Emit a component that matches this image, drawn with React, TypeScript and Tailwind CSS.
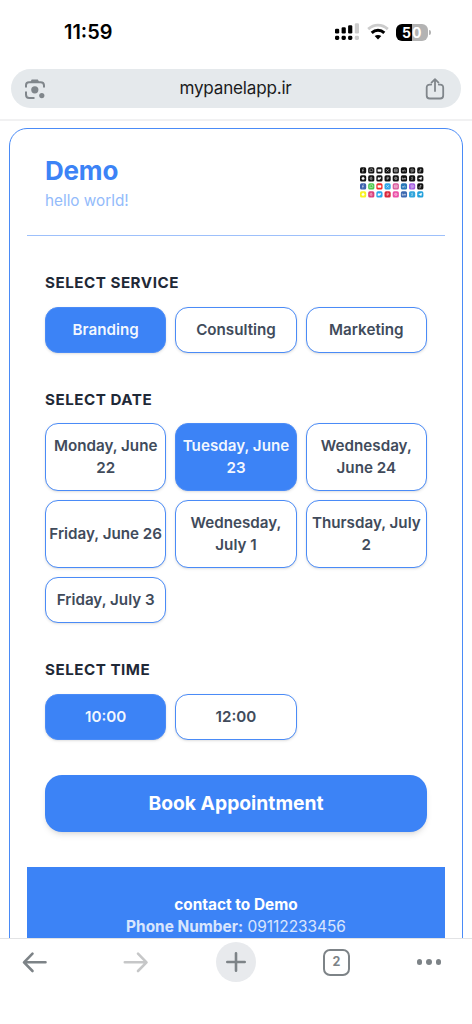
import React, { useState } from "react";
import clsx from "clsx";

const services = ["Branding", "Consulting", "Marketing"];

const dates = [
  ["Monday, June", "22"],
  ["Tuesday, June", "23"],
  ["Wednesday,", "June 24"],
  ["Friday, June 26"],
  ["Wednesday,", "July 1"],
  ["Thursday, July", "2"],
  ["Friday, July 3"],
];

const times = ["10:00", "12:00"];

// Social icon tiles of the shop logo, row by row
const logoRows = [
  ["#111", "#111", "#111", "#111", "#111", "#111", "#111", "#111"],
  ["#111", "#111", "#111", "#111", "#111", "#111", "#111", "#111"],
  ["#3f62ad", "#48c848", "#f02828", "#30a5e8", "#d8569a", "#2878b8", "#a35be0", "#111"],
  ["#f8f222", "#d9407c", "#28a5ec", "#d9283c", "#ec50a8", "#3c68b0", "#30a5dc", "#20a0dc"],
];

const glyphs = [
  "M.6-1.8C-.2-1.8-.3-1.2-.3-.6V2M-1 0H.8",
  "M-1.5 1.5L-1.2.6A1.5 1.5 0 1 1-.5 1.2Z",
  "M-1.6-1H1.6V1H-1.6ZM-.3-.4L.5 0L-.3.4Z",
  "M-1.4-1.4L1.4 1.4M1.4-1.4L-1.4 1.4",
  "M-1.4-1.4H1.4V1.4H-1.4ZM-.6 0A.6.6 0 1 0 .6 0A.6.6 0 1 0-.6 0",
  "M-1.3-.4V1.3M-.3 1.3V-.4M-.3.2C.2-.6 1.3-.6 1.3.4V1.3",
  "M-1.6 0A1.6 1.4 0 1 1 0 1.4L-1 1.7V1M-.9.4L-.2-.3L.3.2L.9-.4",
  "M.2-1.6V.8A.8.8 0 1 1-.7 0M.2-1.4C.4-.7.8-.5 1.3-.5",
  "M0-1.4C1-1.4.8-.2 1.4.5L.5 1.2H-.5L-1.4.5C-.8-.2-1-1.4 0-1.4Z",
  "M.8-.5C.5-1.8-1.3-1.4-1.2 0C-1.1 1.8 1.2 1.6 1 .4C.8-.5-.7-.4-.5.4",
  "M-1.6 1C1 1.8 1.3 0 1.3-.9L.6-1.2L0-.4L-1.3-1Z",
  "M-.5 1.6L.2-.8M-.8.3C-1.6-1.6 1.5-1.9 1.1-.2C.8 1 0 .6 0 .2",
  "M-1.2 0A1.2 1.2 0 1 0 1.2 0A1.2 1.2 0 1 0-1.2 0M-1-.5L1 .5",
  "M-1.7-1V1H-.8C.1 1-.1 0-.8 0H-1.7M.4.2H1.7C1.6-.9.4-.8.4.2C.4 1.1 1.3 1.2 1.6.8",
  "M.9-.9C-.2-1.6-1.3-.4 0 0C1.4.4.1 1.6-1 .8",
  "M-1.6 0L1.5-1.3L.9 1.3L-.3.5Z",
];

// Glyphs that read as solid shapes at this size
const solid = [2, 8, 10, 15];

function Logo() {
  return (
    <svg width="66" height="34" viewBox="0 0 66 34" className="mr-[2px]">
      {logoRows.map((row, r) =>
        row.map((color, c) => {
          const g = (r % 2) * 8 + c;
          return (
            <g key={`${r}-${c}`} transform={`translate(${4.1 + c * 8.17} ${4.4 + r * 8})`}>
              <rect x="-3.1" y="-3.1" width="6.2" height="6.2" rx="1.6" fill={color} />
              <path
                d={glyphs[g]}
                fill={solid.includes(g) ? "#fff" : "none"}
                stroke="#fff"
                strokeOpacity="0.75"
                strokeWidth="0.6"
              />
            </g>
          );
        })
      )}
    </svg>
  );
}

function StatusBar() {
  return (
    <div className="flex h-[69px] items-start justify-between pt-[20px] pr-[41px] pl-[64px]">
      <span className="text-[19.9px] leading-[25px] font-semibold text-black">11:59</span>
      <div className="flex items-center pt-[3px]">
        {/* Dual sim signal */}
        <svg width="25" height="18" viewBox="0 0 25 18">
          <g fill="#000">
            <rect x="0" y="5.7" width="4.2" height="4.8" rx="1.2" />
            <rect x="6.6" y="4.2" width="4.2" height="6.3" rx="1.2" />
            <rect x="13.1" y="2.2" width="4.2" height="8.3" rx="1.2" />
            <rect x="0" y="12.8" width="4.2" height="4.2" rx="1.4" />
            <rect x="6.6" y="12.8" width="4.2" height="4.2" rx="1.4" />
            <rect x="13.1" y="12.8" width="4.2" height="4.2" rx="1.4" />
          </g>
          <g fill="#ccc">
            <rect x="19.8" y="0.3" width="4.2" height="10.2" rx="1.2" />
            <rect x="19.8" y="12.8" width="4.2" height="4.2" rx="1.4" />
          </g>
        </svg>
        {/* Wifi */}
        <svg width="22" height="18" viewBox="0 0 22 18" className="ml-[7px]" fill="none">
          <path d="M1.2 6.1C7 .8 15 .8 20.8 6.1" stroke="#ccc" strokeWidth="2.8" />
          <path d="M4.7 9.9C8.4 6.5 13.6 6.5 17.3 9.9" stroke="#000" strokeWidth="3" />
          <path d="M11 16.5L7.7 13.1C9.6 11.6 12.4 11.6 14.3 13.1Z" fill="#000" />
        </svg>
        <div className="ml-[7px] flex items-center">
          <div className="flex h-[17px] w-[32px] overflow-hidden rounded-[6px] text-[14px] leading-[17.5px] font-bold text-white">
            <span className="w-[16px] bg-black pr-[1px] text-right">5</span>
            <span className="w-[16px] bg-[#b3b3b3]">0</span>
          </div>
          <div className="ml-[1px] h-[5px] w-[2px] rounded-r-full bg-[#b3b3b3]" />
        </div>
      </div>
    </div>
  );
}

function AddressBar() {
  return (
    <div className="h-[52px] border-b-2 border-[#f1f1f2] px-[11px]">
      <div className="flex h-[39px] items-center justify-between rounded-full bg-[#e5e9ec] pr-[16px] pl-[13px]">
        <svg width="22" height="22" viewBox="0 0 22 22" fill="none" stroke="#80868b" strokeWidth="2">
          <path d="M2 9.5V7.3C2 5.3 3.3 4.2 5 4.2H16.5C18.5 4.2 20 5.5 20 7.5V9.5" />
          <path d="M2 13.5V16.5C2 18.8 3.2 20 5.2 20H10.5" />
          <path d="M6.2 4.3L7.7 1.4H13.8L15.4 4.3Z" fill="#80868b" stroke="none" />
          <circle cx="10.8" cy="11.8" r="3.6" fill="#80868b" stroke="none" />
          <circle cx="17.8" cy="17.6" r="2.6" fill="#80868b" stroke="none" />
        </svg>
        <span className="pb-[2px] text-[17.1px] tracking-[-0.2px] text-[#1b1b1d]">mypanelapp.ir</span>
        <svg
          width="20"
          height="23"
          viewBox="0 0 20 23"
          fill="none"
          stroke="#80868b"
          strokeWidth="1.8"
          strokeLinecap="round"
          strokeLinejoin="round"
        >
          <path d="M6.2 7.6H4.7C2.8 7.6 1.7 8.7 1.7 10.5V18.5C1.7 20.5 2.8 21.5 4.7 21.5H15.2C17.1 21.5 18.2 20.5 18.2 18.5V10.5C18.2 8.7 17.1 7.6 15.2 7.6H13.8" />
          <path d="M10 14V2.4M6.5 5.6L10 2.2L13.5 5.6" />
        </svg>
      </div>
    </div>
  );
}

interface OptionProps {
  lines: string[];
  active: boolean;
  onClick: () => void;
}

function Option({ lines, active, onClick }: OptionProps) {
  return (
    <button
      onClick={onClick}
      className={clsx(
        "flex flex-col items-center justify-center rounded-[13px] border border-[#4a8bf7] py-[11px] text-[15.2px] leading-[22px] font-semibold whitespace-nowrap shadow-sm",
        active ? "bg-[#3c83f6] text-white/95" : "bg-white text-[#414b5b]"
      )}
    >
      {lines.map((line) => (
        <span key={line}>{line}</span>
      ))}
    </button>
  );
}

function Section({ title, children }: { title: string; children: React.ReactNode }) {
  return (
    <section className="mt-[35px]">
      <h2 className="text-[15.2px] leading-[23.6px] font-bold tracking-[0.5px] text-[#1f2937]">{title}</h2>
      <div className="mt-[12px] grid grid-cols-3 gap-[9px]">{children}</div>
    </section>
  );
}

function BottomBar() {
  return (
    <nav className="flex h-[86px] items-start border-t border-[#e2e3e5] bg-white pt-[3px] pl-[22px]">
      <div className="flex h-[40px] items-center">
        <svg width="26" height="22" viewBox="0 0 26 22" fill="none" stroke="#7d8387" strokeWidth="2.6" strokeLinecap="round" strokeLinejoin="round">
          <path d="M23.5 11.3H2.5M10.5 2.6L2 11.3L10.5 20" />
        </svg>
      </div>
      <div className="ml-[75px] flex h-[40px] items-center">
        <svg width="26" height="22" viewBox="0 0 26 22" fill="none" stroke="#c6c7c8" strokeWidth="2.6" strokeLinecap="round" strokeLinejoin="round">
          <path d="M1.8 11.3H23M15 2.6L23.5 11.3L15 20" />
        </svg>
      </div>
      <div className="ml-[67px] flex size-[40px] items-center justify-center rounded-full bg-[#e8eaed]">
        <svg width="20" height="20" viewBox="0 0 20 20" stroke="#7d8387" strokeWidth="2.6" strokeLinecap="round">
          <path d="M10 1.3V18.7M1.3 10H18.7" />
        </svg>
      </div>
      <div className="ml-[67px] flex h-[40px] items-center">
        <div className="flex size-[27px] items-center justify-center rounded-[7px] border-2 border-[#7d8387] text-[12.5px] font-bold text-[#7d8387]">
          2
        </div>
      </div>
      <div className="ml-[66.5px] flex h-[40px] items-center gap-[4.4px]">
        <span className="size-[5.4px] rounded-full bg-[#7d8387]" />
        <span className="size-[5.4px] rounded-full bg-[#7d8387]" />
        <span className="size-[5.4px] rounded-full bg-[#7d8387]" />
      </div>
    </nav>
  );
}

export default function App() {
  const [service, setService] = useState(0);
  const [date, setDate] = useState(1);
  const [time, setTime] = useState(0);

  return (
    <div className="flex h-[1024px] w-[472px] flex-col overflow-hidden bg-white font-['Inter',sans-serif]">
      <StatusBar />
      <AddressBar />

      <main className="min-h-0 flex-1 overflow-hidden px-[9px] pt-[7px]">
        <div className="h-[900px] rounded-[18px] border border-[#4a8bf7] px-[17px]">
          <header className="flex h-[107px] items-start justify-between border-b border-[#9dc0fb] px-[18px] pt-[23px]">
            <div>
              <h1 className="text-[26px] leading-[37px] font-bold tracking-[-0.2px] text-[#3c83f6]">Demo</h1>
              <p className="text-[15.3px] leading-[23px] text-[#93bbfb]">hello world!</p>
            </div>
            <div className="pt-[14px]">
              <Logo />
            </div>
          </header>

          <div className="px-[18px]">
            <Section title="SELECT SERVICE">
              {services.map((s, i) => (
                <Option key={s} lines={[s]} active={service === i} onClick={() => setService(i)} />
              ))}
            </Section>
            <Section title="SELECT DATE">
              {dates.map((d, i) => (
                <Option key={d.join(" ")} lines={d} active={date === i} onClick={() => setDate(i)} />
              ))}
            </Section>
            <Section title="SELECT TIME">
              {times.map((t, i) => (
                <Option key={t} lines={[t]} active={time === i} onClick={() => setTime(i)} />
              ))}
            </Section>
            <button className="mt-[35px] h-[57px] w-full rounded-[17px] bg-[#3c83f6] text-[19.3px] font-bold text-white shadow-md">
              Book Appointment
            </button>
          </div>

          <footer className="mt-[35px] h-[120px] bg-[#3c83f6] pt-[27px] text-center text-[15.4px] leading-[22px]">
            <p className="font-bold text-white">contact to Demo</p>
            <p className="text-white/80">
              <span className="font-bold">Phone Number:</span> 09112233456
            </p>
          </footer>
        </div>
      </main>

      <BottomBar />
    </div>
  );
}
